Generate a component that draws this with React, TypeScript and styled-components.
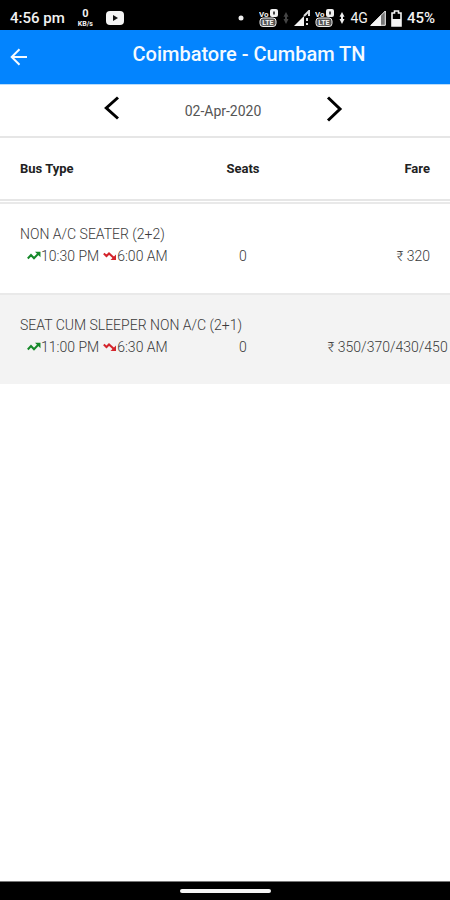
import React from "react";
import styled, { createGlobalStyle } from "styled-components";

const GlobalStyle = createGlobalStyle`
  * { box-sizing: border-box; }
  body {
    margin: 0;
    background: #fff;
    color: #3a3a3a;
    font-family: Roboto, "Noto Sans", sans-serif;
    font-size: 14px;
  }
`;

const Screen = styled.div`
  min-height: 100vh;
  display: flex;
  flex-direction: column;
`;

const StatusBar = styled.div`
  height: 30px;
  padding: 6px 15px 0 10px;
  display: flex;
  align-items: center;
  justify-content: space-between;
  background: #000;
  color: #f2f2f2;
  font-size: 15px;
  font-weight: 500;
`;

const StatusGroup = styled.div<{ $gap: number }>`
  display: flex;
  align-items: center;
  gap: ${(p) => p.$gap}px;
`;

const NetSpeed = styled.span`
  display: flex;
  flex-direction: column;
  align-items: center;
  font-weight: 700;
`;

const SpeedValue = styled.span`
  font-size: 11px;
  line-height: 12px;
`;

const SpeedUnit = styled.span`
  font-size: 7px;
  line-height: 8px;
`;

const Network = styled.span`
  font-size: 14px;
  font-weight: 400;
`;

const Header = styled.header`
  height: 55px;
  display: grid;
  grid-template-columns: 48px 1fr;
  background: #0384fe;
  border-bottom: 1px solid #b9dcfb;
  color: #f4faff;
`;

const IconButton = styled.button`
  padding: 0;
  border: 0;
  background: none;
  color: inherit;
  display: flex;
  align-items: center;
  justify-content: center;
  cursor: pointer;
`;

const BackButton = styled(IconButton)`
  justify-content: flex-start;
  padding-left: 10px;
`;

const Title = styled.h1`
  margin: 0;
  padding: 12px 0 0;
  text-align: center;
  font-size: 20px;
  line-height: 24px;
  font-weight: 500;
`;

const DateBar = styled.nav`
  height: 53px;
  display: flex;
  align-items: center;
  justify-content: center;
  gap: 64px;
  padding: 0 4px 4px 0;
  border-bottom: 2px solid #e6e6e6;
  color: #000;
`;

const TravelDate = styled.time`
  color: #555;
  padding-top: 4px;
`;

const BusTable = styled.table`
  width: 100%;
  table-layout: fixed;
  border-collapse: separate;
  border-spacing: 0;
`;

const Column = styled.col<{ $width: number }>`
  width: ${(p) => p.$width}%;
`;

const HeadCell = styled.th<{ $align: "left" | "center" | "right" }>`
  height: 63px;
  padding: 0 20px;
  border-bottom: 2px solid #e6e6e6;
  text-align: ${(p) => p.$align};
  color: #222;
  font-size: 13px;
  font-weight: 700;
  white-space: nowrap;
  &:nth-child(2) { padding: 0; }
`;

const Body = styled.tbody`
  &::before {
    content: "";
    display: block;
    height: 1px;
  }
`;

const BusRow = styled.tr`
  &:nth-child(even) { background: #f3f3f3; }
`;

const Cell = styled.td<{ $align: "left" | "center" | "right" }>`
  padding: 19px 20px 26px;
  border-top: 2px solid #e9e9e9;
  text-align: ${(p) => p.$align};
  vertical-align: bottom;
  font-weight: 300;
  line-height: 22px;
  white-space: nowrap;
  &:nth-child(2) { padding-left: 0; padding-right: 0; }
  &:last-child { padding-left: 44px; }
`;

const Times = styled.div`
  display: flex;
  align-items: center;
  gap: 4px;
  padding-left: 7px;
`;

const TimeLabel = styled.span`
  display: flex;
  align-items: center;
`;

const GestureBar = styled.footer`
  height: 19px;
  margin-top: auto;
  display: flex;
  align-items: center;
  justify-content: center;
  background: #000;
  border-top: 1px solid #777;
`;

const GestureHandle = styled.span`
  width: 91px;
  height: 4px;
  border-radius: 2px;
  background: #f5f5f5;
`;

const YoutubeIcon = () => (
  <svg width="18" height="14" viewBox="0 0 18 14">
    <rect width="18" height="14" rx="4" fill="#f4f4f4" />
    <path d="M7 4v6l5-3z" fill="#111" />
  </svg>
);

const VolteIcon = () => (
  <svg width="19" height="18" viewBox="0 0 19 18" fontFamily="Roboto" fontWeight="700">
    <text x="0" y="7.5" fontSize="8" fill="#f0f0f0">Vo</text>
    <rect x="11" y="0" width="8" height="8" rx="2" fill="#f0f0f0" />
    <path d="M14 2.5h2v3h-2z" fill="#444" />
    <rect x="1" y="9" width="16" height="8.5" rx="3" fill="#555" stroke="#eee" />
    <text x="3.2" y="16" fontSize="7" fill="#f4f4f4">LTE</text>
  </svg>
);

const DotIcon = () => (
  <svg width="16" height="6" viewBox="0 0 16 6">
    <circle cx="3" cy="3" r="2.5" fill="#eee" />
  </svg>
);

const DataIcon = ({ dim = false }: { dim?: boolean }) => (
  <svg width="6" height="12" viewBox="0 0 6 12" fill={dim ? "#444" : "#eee"}>
    <path d="M3 0l2.5 4.800h-5zM3 12L.5 7h5z" />
    <path d="M2 3h2v6H2z" />
  </svg>
);

const SignalIcon = ({ weak = false }: { weak?: boolean }) => (
  <svg width="16" height="16" viewBox="0 0 16 16">
    {weak ? (
      <>
        <path d="M0 16L10 6v10z" fill="#f4f4f4" />
        <path d="M10 6l5-5v5M13 8v3M13 13v2" fill="none" stroke="#ddd" strokeWidth="2" />
      </>
    ) : (
      <>
        <path d="M1 15.3L15.3 1v14.3z" fill="#777" stroke="#f4f4f4" />
        <path d="M0 16L11 5v11z" fill="#f4f4f4" />
      </>
    )}
  </svg>
);

const BatteryIcon = () => (
  <svg width="11" height="17" viewBox="0 0 11 17">
    <path d="M1 3h2.500V1h4v2H10v13H1z" fill="#000" stroke="#f4f4f4" strokeWidth="1.600" />
    <path d="M1 9h9v7H1z" fill="#f4f4f4" />
  </svg>
);

const BackIcon = () => (
  <svg width="18" height="18" viewBox="0 0 18 18" fill="none" stroke="currentColor" strokeWidth="2">
    <path d="M17 9H2M9.500 1.200L1.700 9l7.800 7.800" />
  </svg>
);

const Chevron = ({ right = false }: { right?: boolean }) => (
  <svg width="18" height="26" viewBox="0 0 18 26" fill="none" stroke="currentColor" strokeWidth="3">
    <path d={right ? "M3 1.500L15 13 3 24.500" : "M15 1.500L3.300 12 15 22.500"} />
  </svg>
);

const TrendIcon = ({ down = false }: { down?: boolean }) => (
  <svg width="14" height="10" viewBox="0 0 14 10" fill="none" stroke={down ? "#d4252c" : "#16892a"} strokeWidth="2">
    {down ? (
      <>
        <path d="M.8 2.500L3.500 5 6 2.500 11 7" />
        <path d="M13 3.500V9H7.500z" fill="#d4252c" stroke="none" />
      </>
    ) : (
      <>
        <path d="M.8 7.500L4 4l3 3.200L11.500 2.500" />
        <path d="M8 .8h5.500v5.500z" fill="#16892a" stroke="none" />
      </>
    )}
  </svg>
);

const buses = [
  { name: "NON A/C SEATER (2+2)", departs: "10:30 PM", arrives: "6:00 AM", seats: 0, fare: "320" },
  { name: "SEAT CUM SLEEPER NON A/C (2+1)", departs: "11:00 PM", arrives: "6:30 AM", seats: 0, fare: "350/370/430/450" },
];

export default function App() {
  return (
    <Screen>
      <GlobalStyle />
      <StatusBar>
        <StatusGroup $gap={13}>
          <span>4:56 pm</span>
          <NetSpeed>
            <SpeedValue>0</SpeedValue>
            <SpeedUnit>KB/s</SpeedUnit>
          </NetSpeed>
          <YoutubeIcon />
        </StatusGroup>
        <StatusGroup $gap={5}>
          <DotIcon />
          <VolteIcon />
          <DataIcon dim />
          <SignalIcon weak />
          <VolteIcon />
          <DataIcon />
          <StatusGroup $gap={2}>
            <Network>4G</Network>
            <SignalIcon />
          </StatusGroup>
          <BatteryIcon />
          <span>45%</span>
        </StatusGroup>
      </StatusBar>
      <Header>
        <BackButton aria-label="Back"><BackIcon /></BackButton>
        <Title>Coimbatore - Cumbam TN</Title>
      </Header>
      <DateBar>
        <IconButton aria-label="Previous day"><Chevron /></IconButton>
        <TravelDate dateTime="2020-04-02">02-Apr-2020</TravelDate>
        <IconButton aria-label="Next day"><Chevron right /></IconButton>
      </DateBar>
      <BusTable>
        <colgroup>
          <Column $width={45} />
          <Column $width={18} />
          <Column $width={37} />
        </colgroup>
        <thead>
          <tr>
            <HeadCell $align="left" scope="col">Bus Type</HeadCell>
            <HeadCell $align="center" scope="col">Seats</HeadCell>
            <HeadCell $align="right" scope="col">Fare</HeadCell>
          </tr>
        </thead>
        <Body>
          {buses.map((bus) => (
            <BusRow key={bus.name}>
              <Cell $align="left">
                <div>{bus.name}</div>
                <Times>
                  <TimeLabel><TrendIcon />{bus.departs}</TimeLabel>
                  <TimeLabel><TrendIcon down />{bus.arrives}</TimeLabel>
                </Times>
              </Cell>
              <Cell $align="center">{bus.seats}</Cell>
              <Cell $align="right">₹ {bus.fare}</Cell>
            </BusRow>
          ))}
        </Body>
      </BusTable>
      <GestureBar><GestureHandle /></GestureBar>
    </Screen>
  );
}
